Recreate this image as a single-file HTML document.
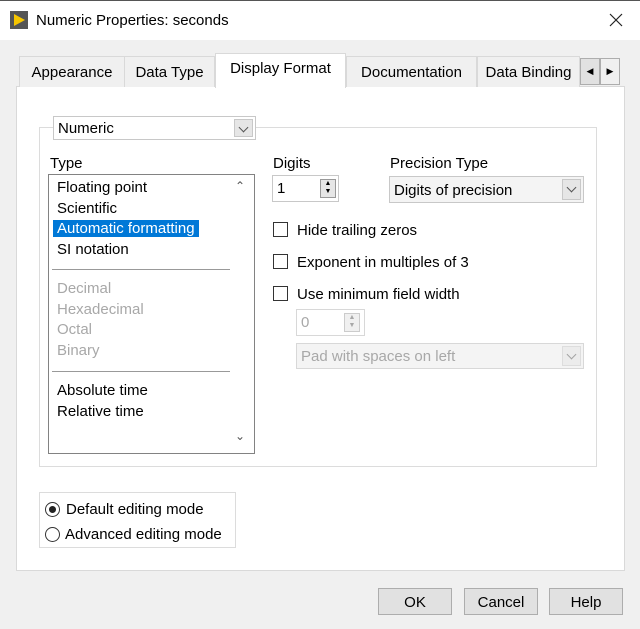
<!DOCTYPE html><html><head><style>
*{margin:0;padding:0;box-sizing:border-box}
body{width:640px;height:629px;background:#f0f0f0;font-family:"Liberation Sans",sans-serif;font-size:15px;color:#000;position:relative;overflow:hidden}
.a{position:absolute;white-space:nowrap}
.tab{position:absolute;top:56px;height:31px;background:#f0f0f0;border:1px solid #d9d9d9;border-bottom:none;text-align:center;line-height:31px}
.box{position:absolute;border:1px solid #adadad;background:#fff}
.dd{position:absolute;right:2px;top:2px;bottom:2px;width:19px;background:#e6e6e6;border:1px solid #c8c8c8}
.dd:after{content:"";position:absolute;left:5px;top:4px;width:6px;height:6px;border-right:1px solid #555;border-bottom:1px solid #555;transform:rotate(45deg)}
.cb{position:absolute;width:15px;height:15px;border:1px solid #333;background:#fff}
.btn{position:absolute;top:588px;width:74px;height:27px;background:#e1e1e1;border:1px solid #adadad;text-align:center;line-height:27px}
.g{color:#a8a8a8}
</style></head><body>
<div class="a" style="left:0;top:0;width:640px;height:40px;background:#fff;border-top:1px solid #555"></div>
<div class="a" style="left:10px;top:11px;width:18px;height:18px;background:#555"><div style="position:absolute;left:4px;top:3px;width:0;height:0;border-left:11px solid #f7c600;border-top:6px solid transparent;border-bottom:6px solid transparent"></div></div>
<div class="a" style="left:36px;top:12px">Numeric Properties: seconds</div>
<svg class="a" style="left:609px;top:13px" width="14" height="14"><path d="M1 1L13 13M13 1L1 13" stroke="#222" stroke-width="1.2"/></svg>
<div class="a" style="left:16px;top:86px;width:609px;height:485px;background:#fff;border:1px solid #d9d9d9"></div>
<div class="tab" style="left:19px;width:106px">Appearance</div>
<div class="tab" style="left:124px;width:91px">Data Type</div>
<div class="tab" style="left:346px;width:131px">Documentation</div>
<div class="tab" style="left:477px;width:103px">Data Binding</div>
<div class="tab" style="left:215px;top:53px;width:131px;height:35px;background:#fff;line-height:29px">Display Format</div>
<div class="a" style="left:580px;top:58px;width:20px;height:27px;background:#e1e1e1;border:1px solid #adadad;font-size:9px;text-align:center;line-height:25px">◀</div>
<div class="a" style="left:600px;top:58px;width:20px;height:27px;background:#f0f0f0;border:1px solid #adadad;font-size:9px;text-align:center;line-height:25px">▶</div>
<div class="a" style="left:39px;top:127px;width:558px;height:340px;border:1px solid #dcdcdc"></div>
<div class="box" style="left:53px;top:116px;width:203px;height:24px;border-color:#c8c8c8"><span class="a" style="left:4px;top:3px">Numeric</span><div class="dd"></div></div>
<div class="a" style="left:50px;top:155px">Type</div>
<div class="box" style="left:48px;top:174px;width:207px;height:280px;border-color:#828282">
<div class="a" style="left:8px;top:3px;line-height:20.5px">Floating point<br>Scientific<br><span style="background:#0078d7;color:#fff;margin-left:-4px;padding:0 4px">Automatic formatting</span><br>SI notation</div>
<div class="a" style="left:3px;top:94px;width:178px;border-top:1px solid #999"></div>
<div class="a g" style="left:8px;top:104px;line-height:20.5px">Decimal<br>Hexadecimal<br>Octal<br>Binary</div>
<div class="a" style="left:3px;top:196px;width:178px;border-top:1px solid #999"></div>
<div class="a" style="left:8px;top:206px;line-height:20.5px">Absolute time<br>Relative time</div>
<div class="a" style="left:186px;top:4px;font-size:12px;color:#555">&#8963;</div>
<div class="a" style="left:186px;top:254px;font-size:12px;color:#555">&#8964;</div>
</div>
<div class="a" style="left:273px;top:155px">Digits</div>
<div class="box" style="left:272px;top:175px;width:67px;height:27px;border-color:#c8c8c8"><span class="a" style="left:4px;top:4px">1</span><div class="a" style="left:47px;top:3px;width:16px;height:19px;background:#e6e6e6;border:1px solid #999;font-size:7px;text-align:center;line-height:8px">▲<br>▼</div></div>
<div class="a" style="left:390px;top:155px">Precision Type</div>
<div class="box" style="left:389px;top:176px;width:195px;height:27px;border-color:#c8c8c8;background:#f4f4f4"><span class="a" style="left:4px;top:5px">Digits of precision</span><div class="dd"></div></div>
<div class="cb" style="left:273px;top:222px"></div><div class="a" style="left:297px;top:222px">Hide trailing zeros</div>
<div class="cb" style="left:273px;top:254px"></div><div class="a" style="left:297px;top:254px">Exponent in multiples of 3</div>
<div class="cb" style="left:273px;top:286px"></div><div class="a" style="left:297px;top:286px">Use minimum field width</div>
<div class="box" style="left:296px;top:309px;width:69px;height:27px;border-color:#d8d8d8"><span class="a g" style="left:4px;top:4px">0</span><div class="a g" style="left:47px;top:3px;width:16px;height:19px;background:#f0f0f0;border:1px solid #ccc;font-size:7px;text-align:center;line-height:8px">▲<br>▼</div></div>
<div class="box" style="left:296px;top:343px;width:288px;height:26px;border-color:#d8d8d8;background:#f4f4f4"><span class="a g" style="left:4px;top:4px">Pad with spaces on left</span><div class="dd" style="opacity:.5"></div></div>
<div class="a" style="left:39px;top:492px;width:197px;height:56px;border:1px solid #dcdcdc"></div>
<div class="a" style="left:45px;top:502px;width:15px;height:15px;border:1px solid #333;border-radius:50%;background:#fff"><div style="position:absolute;left:3px;top:3px;width:7px;height:7px;border-radius:50%;background:#222"></div></div>
<div class="a" style="left:66px;top:501px">Default editing mode</div>
<div class="a" style="left:45px;top:527px;width:15px;height:15px;border:1px solid #333;border-radius:50%;background:#fff"></div>
<div class="a" style="left:65px;top:526px">Advanced editing mode</div>
<div class="btn" style="left:378px">OK</div>
<div class="btn" style="left:464px">Cancel</div>
<div class="btn" style="left:549px">Help</div>
</body></html>
